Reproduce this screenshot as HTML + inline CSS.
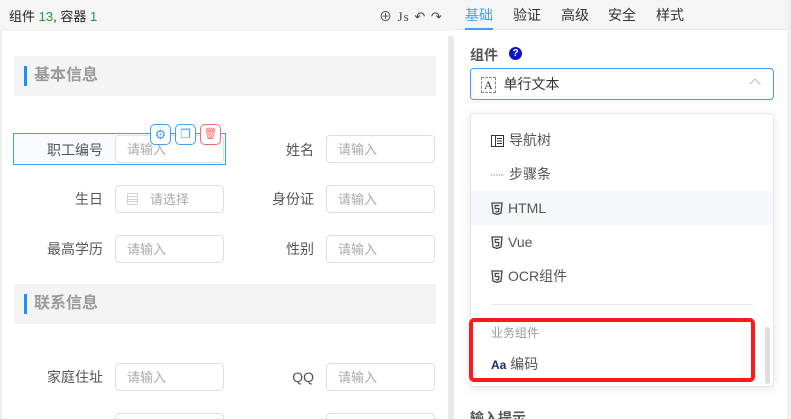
<!DOCTYPE html>
<html><head><meta charset="utf-8"><style>
*{box-sizing:border-box;margin:0;padding:0}
html,body{width:791px;height:419px;overflow:hidden}
body{background:#fff;font-family:"Liberation Sans","Noto Sans CJK SC",sans-serif;position:relative;color:#333}
.a{position:absolute}
.lbl{position:absolute;font-size:14px;color:#555;text-align:right;width:100px;line-height:20px}
.inp{position:absolute;width:109px;height:28px;border:1px solid #dcdfe6;border-radius:4px;font-size:13px;color:#aaa;line-height:28px;padding-left:11px;background:#fff}
.sec{position:absolute;left:14px;width:422px;height:40px;background:#f4f4f4}
.sec i{position:absolute;left:10px;top:10px;width:3px;height:20px;background:#1890ff}
.sec b{position:absolute;left:20px;top:8px;font-size:16px;color:#999;line-height:24px}
.it{position:absolute;left:491px;font-size:14px;color:#555;line-height:20px}
.tab{position:absolute;top:5px;font-size:14px;color:#333;line-height:20px}
svg{vertical-align:-2px;margin-right:5px}
</style></head><body>
<div class="a" style="left:0;top:0;width:455px;height:31px;background:#f5f5f5"></div>
<div class="a" style="left:9px;top:6px;font-size:13px;color:#222">组件 <span style="color:#1a9a3c">13</span>, 容器 <span style="color:#1a9a3c">1</span></div>
<div class="a" style="left:379px;top:6px;font-size:13px;color:#444;letter-spacing:1px">⊕ <span style="font-family:'Liberation Serif'">Js</span> ↶ ↷</div>
<div class="a" style="left:0;top:31px;width:2px;height:388px;background:#eee"></div>
<div class="a" style="left:448px;top:36px;width:6px;height:383px;background:#e8e8e8"></div>
<div class="sec" style="top:56px"><i></i><b>基本信息</b></div>
<div class="a" style="left:13px;top:133px;width:213px;height:32px;border:1px solid #409eff;background:#f7faff"></div>
<div class="lbl" style="left:3px;top:140px">职工编号</div><div class="inp" style="left:115px;top:135px">请输入</div>
<div class="a" style="left:150px;top:124px;width:21px;height:21px;border:1px solid #409eff;border-radius:5px;background:#fff;color:#409eff;font-size:13px;text-align:center;line-height:19px">⚙</div>
<div class="a" style="left:175px;top:124px;width:21px;height:21px;border:1px solid #409eff;border-radius:5px;background:#fff;color:#409eff;font-size:12px;text-align:center;line-height:19px">❐</div>
<div class="a" style="left:200px;top:124px;width:21px;height:21px;border:1px solid #f56c6c;border-radius:5px;background:#fff;color:#f56c6c;font-size:11px;text-align:center;line-height:19px">🗑</div>
<div class="lbl" style="left:214px;top:140px">姓名</div><div class="inp" style="left:326px;top:135px">请输入</div>
<div class="lbl" style="left:3px;top:189px">生日</div><div class="inp" style="left:115px;top:185px;padding-left:10px">▤&nbsp;&nbsp;&nbsp;请选择</div>
<div class="lbl" style="left:214px;top:189px">身份证</div><div class="inp" style="left:326px;top:185px">请输入</div>
<div class="lbl" style="left:3px;top:239px">最高学历</div><div class="inp" style="left:115px;top:235px">请输入</div>
<div class="lbl" style="left:214px;top:239px">性别</div><div class="inp" style="left:326px;top:235px">请输入</div>
<div class="sec" style="top:284px"><i></i><b>联系信息</b></div>
<div class="lbl" style="left:3px;top:367px">家庭住址</div><div class="inp" style="left:115px;top:363px">请输入</div>
<div class="lbl" style="left:214px;top:367px">QQ</div><div class="inp" style="left:326px;top:363px">请输入</div>
<div class="inp" style="left:115px;top:413px;height:6px;border-bottom:none;border-radius:4px 4px 0 0"></div><div class="inp" style="left:326px;top:413px;height:6px;border-bottom:none;border-radius:4px 4px 0 0"></div>

<div class="a" style="left:455px;top:0;width:336px;height:30px;background:#f5f5f5;border-bottom:1px solid #e4e7ed"></div>
<div class="tab" style="left:465px;color:#409eff">基础</div>
<div class="tab" style="left:513px">验证</div>
<div class="tab" style="left:561px">高级</div>
<div class="tab" style="left:608px">安全</div>
<div class="tab" style="left:656px">样式</div>
<div class="a" style="left:465px;top:28px;width:28px;height:2px;background:#409eff"></div>
<div class="a" style="left:470px;top:45px;font-size:14px;color:#555;font-weight:bold">组件</div>
<div class="a" style="left:509px;top:47px;width:13px;height:13px;border-radius:50%;background:#1010d0;color:#fff;font-size:10px;font-weight:bold;text-align:center;line-height:13px">?</div>
<div class="a" style="left:470px;top:68px;width:304px;height:32px;border:1px solid #409eff;border-radius:4px"></div>
<div class="a" style="left:481px;top:75px;font-size:14px;color:#333;line-height:18px"><span style="font-family:'Liberation Serif';font-size:12px;border:1px dashed #888;padding:0 2px">A</span>&nbsp;&nbsp;单行文本</div>
<div class="a" style="left:751px;top:80px;width:8px;height:8px;border-left:1px solid #bbb;border-top:1px solid #bbb;transform:rotate(45deg)"></div>
<div class="a" style="left:470px;top:113px;width:304px;height:274px;border:1px solid #e4e7ed;border-radius:4px;box-shadow:0 2px 10px rgba(0,0,0,.1);background:#fff"></div>
<div class="a" style="left:471px;top:191px;width:302px;height:34px;background:#f5f7fa"></div>
<div class="it" style="top:130px"><svg width="13" height="12" viewBox="0 0 13 12"><rect x="0.5" y="0.5" width="12" height="11" fill="none" stroke="#333"/><line x1="4.5" y1="0" x2="4.5" y2="12" stroke="#333"/><line x1="6" y1="3.5" x2="11" y2="3.5" stroke="#333"/><line x1="6" y1="6" x2="11" y2="6" stroke="#333"/><line x1="6" y1="8.5" x2="11" y2="8.5" stroke="#333"/></svg>导航树</div>
<div class="it" style="top:164px"><svg width="13" height="12" viewBox="0 0 13 12"><line x1="0" y1="6" x2="13" y2="6" stroke="#999" stroke-dasharray="1.5 1"/></svg>步骤条</div>
<div class="it" style="top:198px"><svg width="12" height="13" viewBox="0 0 12 13"><path d="M1 1h10l-1 10-4 1.5-4-1.5z" fill="none" stroke="#444" stroke-width="1.3"/><path d="M8.3 3.5H4l.3 3h3.6l-.3 3-1.6.5-1.6-.5" fill="none" stroke="#444" stroke-width="1.2"/></svg>HTML</div>
<div class="it" style="top:232px"><svg width="12" height="13" viewBox="0 0 12 13"><path d="M1 1h10l-1 10-4 1.5-4-1.5z" fill="none" stroke="#444" stroke-width="1.3"/><path d="M8.3 3.5H4l.3 3h3.6l-.3 3-1.6.5-1.6-.5" fill="none" stroke="#444" stroke-width="1.2"/></svg>Vue</div>
<div class="it" style="top:266px"><svg width="12" height="13" viewBox="0 0 12 13"><path d="M1 1h10l-1 10-4 1.5-4-1.5z" fill="none" stroke="#444" stroke-width="1.3"/><path d="M8.3 3.5H4l.3 3h3.6l-.3 3-1.6.5-1.6-.5" fill="none" stroke="#444" stroke-width="1.2"/></svg>OCR组件</div>
<div class="a" style="left:491px;top:304px;width:262px;height:1px;background:#e4e7ed"></div>
<div class="it" style="top:323px;font-size:12px;color:#999">业务组件</div>
<div class="it" style="top:354px"><b style="font-size:12px;color:#1a2a6c">Aa</b> 编码</div>
<div class="a" style="left:765px;top:327px;width:5px;height:57px;background:#ddd;border-radius:3px"></div>
<div class="a" style="left:469px;top:318px;width:286px;height:64px;border:4px solid #ff1a1a;border-radius:5px"></div>
<div class="a" style="left:470px;top:408px;height:11px;overflow:hidden;font-size:14px;line-height:20px;color:#555;font-weight:bold">输入提示</div>
<div class="a" style="left:787px;top:0;width:4px;height:419px;background:#f0f0f0"></div>
</body></html>
